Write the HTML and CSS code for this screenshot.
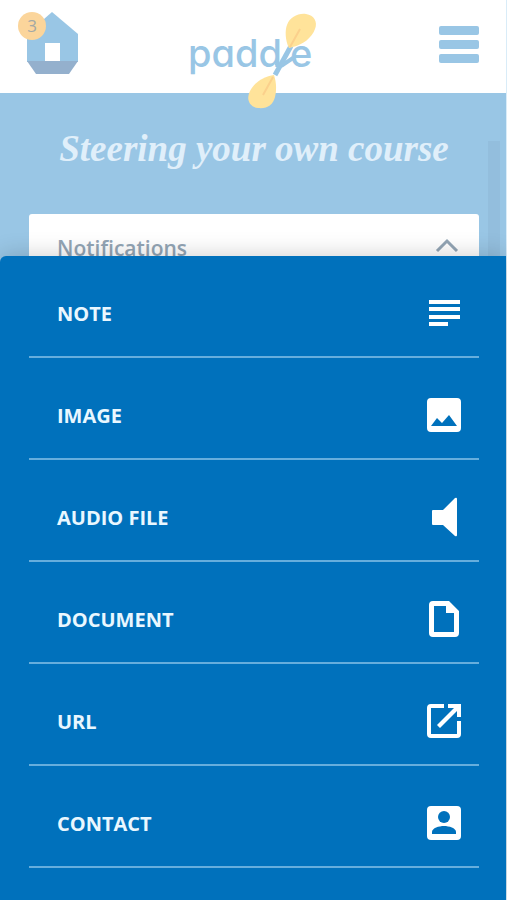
FILE: index.html
```html
<!DOCTYPE html>
<html lang="en">
    <head>
        <meta charset="UTF-8">
        <meta name="viewport" content="width=device-width, initial-scale=1.0">
        <title>Paddle</title>
        <link rel="stylesheet" href="styles.css">
    </head>
<body>
    <div class="page">
        <header class="header">
            <a class="home" href="#" aria-label="Home">
                <svg width="52" height="62" viewBox="0 0 52 62">
                    <path d="M25 0L51 22V50H0V22Z" fill="#99c6e5"/>
                    <path d="M0 49H51L42 62H9Z" fill="#94b0cd"/>
                    <rect x="18" y="31" width="15" height="18" fill="#fff"/>
                </svg>
                <span class="badge">3</span>
            </a>
            <a class="logo" href="#" aria-label="Paddle">
                <svg width="130" height="93" viewBox="0 0 130 93">
                    <text class="logo-text" x="0" y="67">padd</text>
                    <text class="logo-text" x="102" y="67">e</text>
                    <path d="M88 63Q92 68 96 64L105 58" fill="none" stroke="#99c6e5" stroke-width="4"/>
                    <path d="M103 46L87 75" stroke="#99c6e5" stroke-width="5"/>
                    <path d="M101 48C97 40 97 30 99 25C102 17 110 13 118 14C126 15 130 22 127 29C124 38 114 45 105 47Z" fill="#ffe39a"/>
                    <path d="M102 47L112 29" stroke="#fbd08c" stroke-width="2"/>
                    <path d="M86 75C76 76 66 83 62 91C58 99 61 107 70 108C79 109 85 105 87 97C89 89 88 81 86 75Z" fill="#ffe39a"/>
                    <path d="M85 77L75 95" stroke="#fbd08c" stroke-width="2"/>
                </svg>
            </a>
            <button class="menu" type="button" aria-label="Menu">
                <span></span>
                <span></span>
                <span></span>
            </button>
        </header>

        <main class="main">
            <p class="tagline">Steering your own course</p>
            <section class="card">
                <h2>Notifications</h2>
                <svg width="24" height="16" viewBox="0 0 24 16">
                    <path d="M2 13L12 3L22 13" fill="none" stroke="#93a5b5" stroke-width="3"/>
                </svg>
            </section>
            <div class="scrollbar"></div>
        </main>

        <nav class="sheet">
            <button class="row" type="button">
                NOTE
                <svg class="icon" viewBox="0 0 36 40">
                    <path d="M3 7H34V11H3ZM3 14H34V18H3ZM3 22H34V26H3ZM3 29H22V33H3Z"/>
                </svg>
            </button>
            <button class="row" type="button">
                IMAGE
                <svg class="icon" viewBox="0 0 36 40">
                    <path fill-rule="evenodd" d="M5 3H31Q35 3 35 7V33Q35 37 31 37H5Q1 37 1 33V7Q1 3 5 3ZM5 31H31L23 20L16 28L11 23Z"/>
                </svg>
            </button>
            <button class="row" type="button">
                AUDIO FILE
                <svg class="icon" viewBox="0 0 36 40">
                    <path d="M7 13H17L29 1Q31 0 31 2V38Q31 40 29 39L17 28H7Q6 28 6 27V14Q6 13 7 13Z"/>
                </svg>
            </button>
            <button class="row" type="button">
                DOCUMENT
                <svg class="icon" viewBox="0 0 36 40">
                    <path fill-rule="evenodd" d="M7 2H23L33 12V34Q33 38 29 38H7Q3 38 3 34V6Q3 2 7 2ZM8 7V33H28V14H20V7Z"/>
                </svg>
            </button>
            <button class="row" type="button">
                URL
                <svg class="icon" viewBox="0 0 36 40">
                    <path d="M18 3V7H5V33H31V20H35V33Q35 37 31 37H5Q1 37 1 33V7Q1 3 5 3ZM22 3H35V16H31V10L14 27L11 24L28 7H22Z"/>
                </svg>
            </button>
            <button class="row" type="button">
                CONTACT
                <svg class="icon" viewBox="0 0 36 40">
                    <rect x="1" y="3" width="34" height="34" rx="4"/>
                    <circle class="cut" cx="18" cy="14" r="6"/>
                    <path class="cut" d="M6 31V29C6 25 13 23 18 23C23 23 30 25 30 29V31Z"/>
                </svg>
            </button>
        </nav>
    </div>
</body>
</html>
```
FILE: styles.css
```css
* {
    box-sizing: border-box;
}
body {
    margin: 0;
    background-color: #d9ecf8;
    font-family: "Open Sans", "Noto Sans", sans-serif;
}
.page {
    display: flex;
    flex-direction: column;
    min-height: 100vh;
    margin-right: 1px;
    background-color: #99c6e5;
}
.header {
    position: relative;
    z-index: 1;
    display: grid;
    grid-template-columns: 1fr auto 1fr;
    align-items: start;
    height: 93px;
    padding: 0 27px;
    background-color: #fff;
}
.home {
    position: relative;
    justify-self: start;
    margin-top: 12px;
}
.home svg, .logo svg {
    display: block;
    overflow: visible;
}
.badge {
    position: absolute;
    top: 0;
    left: -9px;
    width: 28px;
    height: 28px;
    border-radius: 50%;
    background-color: #fbd59b;
    color: #a3a8a5;
    font-size: 17px;
    line-height: 27px;
    text-align: center;
}
.logo-text {
    fill: #99c6e5;
    font-family: Inter, sans-serif;
    font-feature-settings: "cv11";
    font-size: 38px;
    font-weight: 500;
}
.menu {
    display: flex;
    flex-direction: column;
    justify-self: end;
    gap: 5px;
    margin-top: 26px;
    padding: 0;
    border: none;
    background: none;
    cursor: pointer;
}
.menu span {
    width: 40px;
    height: 9px;
    border-radius: 2px;
    background-color: #99c6e5;
}
.main {
    position: relative;
    padding: 32px 27px 0 29px;
}
.tagline {
    margin: 0 0 41px;
    color: #e0effa;
    font-family: "Liberation Serif", serif;
    font-size: 37px;
    font-style: italic;
    font-weight: bold;
    line-height: 48px;
    text-align: center;
}
/* only the top of the card shows above the sheet */
.card {
    display: flex;
    justify-content: space-between;
    height: 42px;
    padding: 20px 20px 0 28px;
    overflow: hidden;
    border-radius: 3px 3px 0 0;
    background-color: #fff;
}
.card h2 {
    margin: 0;
    color: #93a5b5;
    font-size: 21px;
    font-weight: 600;
    line-height: 28px;
}
.card svg {
    margin-top: 4px;
}
.scrollbar {
    position: absolute;
    top: 48px;
    right: 6px;
    bottom: 0;
    width: 12px;
    background-color: #93bedd;
}
.sheet {
    position: relative;
    flex: 1;
    padding: 0 27px 32px 29px;
    border-radius: 6px 0 0 0;
    background-color: #0071bc;
    box-shadow: 0 0 24px rgba(0, 0, 0, 0.2);
}
.row {
    display: flex;
    justify-content: space-between;
    align-items: center;
    width: 100%;
    height: 102px;
    padding: 14px 17px 0 28px;
    border: none;
    border-bottom: 2px solid #66aedd;
    background: none;
    color: #e9f7ff;
    font-family: inherit;
    font-size: 20px;
    font-weight: bold;
    cursor: pointer;
}
.icon {
    width: 36px;
    height: 40px;
    fill: #fff;
}
.cut {
    fill: #0071bc;
}
```
